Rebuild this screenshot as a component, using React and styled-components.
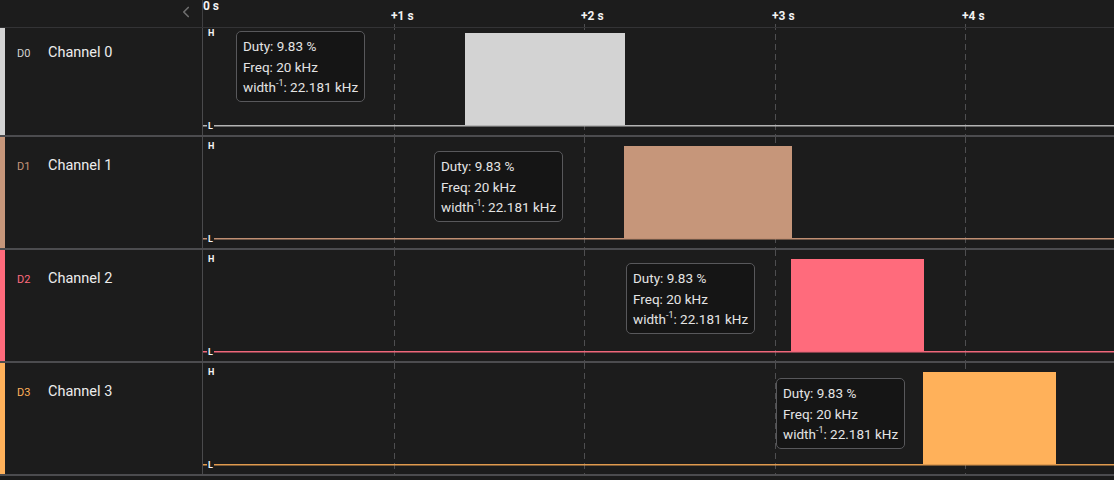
import React from "react";
import styled, { createGlobalStyle } from "styled-components";
import { ChevronLeft } from "lucide-react";

const PX_PER_SEC = 190.6;
const TRACK_W = 911;
const ROW_H = 111;

const channels = [
  { id: "D0", name: "Channel 0", color: "#d3d3d3", line: "#b4b4b4", pulse: [262, 422], tip: { x: 33, y: 7 } },
  { id: "D1", name: "Channel 1", color: "#c6967a", line: "#c08f73", pulse: [421, 589], tip: { x: 231, y: 14 } },
  { id: "D2", name: "Channel 2", color: "#ff6b7c", line: "#f0677a", pulse: [588, 721], tip: { x: 423, y: 13 } },
  { id: "D3", name: "Channel 3", color: "#ffb15a", line: "#e09a4e", pulse: [720, 853], tip: { x: 573, y: 15 } },
];

const ticks = [1, 2, 3, 4];

const GlobalStyle = createGlobalStyle`
  html, body {
    margin: 0;
    background: #1c1c1c;
    overflow: hidden;
  }
  * { box-sizing: border-box; }
`;

function Grid() {
  return (
    <>
      {ticks.map((t) => (
        <line
          key={t}
          x1={Math.round(t * PX_PER_SEC) + 0.5}
          x2={Math.round(t * PX_PER_SEC) + 0.5}
          y1="0"
          y2={ROW_H + 2}
          stroke="#4e4e50"
          strokeWidth="1"
          strokeDasharray="6 4"
        />
      ))}
    </>
  );
}

function Waveform({ ch }) {
  const [a, b] = ch.pulse;
  return (
    <Wave width={TRACK_W} height={ROW_H} viewBox={`0 0 ${TRACK_W} ${ROW_H}`}>
      <Grid />
      <rect x={a} y="9" width={b - a} height="93" fill={ch.color} />
      <rect x="0" y="101" width={TRACK_W} height="1.5" fill={ch.line} />
    </Wave>
  );
}

function Measure({ x, y }) {
  return (
    <Tooltip $x={x} $y={y}>
      <div>Duty: 9.83 %</div>
      <div>Freq: 20 kHz</div>
      <div>
        width<sup>-1</sup>: 22.181 kHz
      </div>
    </Tooltip>
  );
}

function App() {
  return (
    <Screen>
      <GlobalStyle />
      <Header>
        <HeaderSide>
          <ChevronLeft size={18} color="#6f6f6f" strokeWidth={2.2} />
        </HeaderSide>
        <Ruler>
          <TickLabel $x={0} $top>0 s</TickLabel>
          {ticks.map((t) => (
            <TickLabel key={t} $x={Math.round(t * PX_PER_SEC) - 3}>
              +{t} s
            </TickLabel>
          ))}
          <RulerMarks width={TRACK_W} height="27">
            {ticks.map((t) => (
              <line
                key={t}
                x1={Math.round(t * PX_PER_SEC) + 0.5}
                x2={Math.round(t * PX_PER_SEC) + 0.5}
                y1="24"
                y2="27"
                stroke="#4e4e50"
              />
            ))}
          </RulerMarks>
        </Ruler>
      </Header>
      <Viewport>
        <RowList>
          {channels.map((ch) => (
            <Row key={ch.id}>
              <ChannelCell>
                <ColorBar $color={ch.color} />
                <ChannelInfo>
                  <Tag $color={ch.color}>{ch.id}</Tag>
                  <Name>{ch.name}</Name>
                </ChannelInfo>
              </ChannelCell>
              <Track>
                <Waveform ch={ch} />
                <Level $pos="high">H</Level>
                <Level $pos="low">L</Level>
                <Measure x={ch.tip.x} y={ch.tip.y} />
              </Track>
            </Row>
          ))}
        </RowList>
      </Viewport>
    </Screen>
  );
}

const Screen = styled.div`
  display: flex;
  flex-direction: column;
  width: 1114px;
  height: 480px;
  overflow: hidden;
  background: #1c1c1c;
  font-family: Roboto, "Liberation Sans", sans-serif;
`;

const Header = styled.div`
  display: flex;
  height: 28px;
  flex: none;
  border-bottom: 1px solid #333335;
  position: relative;
  z-index: 2;
  background: #1c1c1c;
`;

const HeaderSide = styled.div`
  width: 203px;
  display: flex;
  align-items: center;
  justify-content: flex-end;
  padding-right: 7px;
  padding-bottom: 3px;
  border-right: 1px solid #3f3f41;
`;

const Ruler = styled.div`
  flex: 1;
  position: relative;
`;

const RulerMarks = styled.svg`
  position: absolute;
  left: 0;
  top: 0;
`;

const TickLabel = styled.span`
  position: absolute;
  left: ${({ $x }) => $x}px;
  top: ${({ $top }) => ($top ? "-1px" : "9px")};
  font-size: 12px;
  font-weight: 700;
  line-height: 14px;
  color: #f2f2f2;
  white-space: nowrap;
`;

const Viewport = styled.div`
  flex: 1;
  overflow: hidden;
`;

const RowList = styled.div`
  margin-top: -4px;
`;

const Row = styled.div`
  display: flex;
  height: ${ROW_H + 2}px;
  border-bottom: 2px solid #4c4c4f;
`;

const ChannelCell = styled.div`
  width: 203px;
  display: flex;
  border-right: 1px solid #4a4a4c;
`;

const ColorBar = styled.div`
  width: 5px;
  background: ${({ $color }) => $color};
`;

const ChannelInfo = styled.div`
  display: flex;
  align-items: baseline;
  padding: 20px 0 0 12px;
  gap: 14px;
`;

const Tag = styled.span`
  font-size: 11px;
  color: ${({ $color }) => $color};
  width: 17px;
`;

const Name = styled.span`
  font-size: 14.5px;
  color: #ececec;
`;

const Track = styled.div`
  flex: 1;
  position: relative;
`;

const Wave = styled.svg`
  display: block;
`;

const Level = styled.span`
  position: absolute;
  left: 4px;
  top: ${({ $pos }) => ($pos === "high" ? "4px" : "97px")};
  font-size: 9px;
  font-weight: 700;
  line-height: 10px;
  padding: 0 1px;
  color: #f4f4f4;
  background: ${({ $pos }) => ($pos === "low" ? "#1c1c1c" : "transparent")};
`;

const Tooltip = styled.div`
  position: absolute;
  left: ${({ $x }) => $x}px;
  top: ${({ $y }) => $y}px;
  padding: 4px 6px 3px 6px;
  border: 1px solid #58585b;
  border-radius: 5px;
  background: #151515;
  color: #e4e4e4;
  font-size: 13.5px;
  line-height: 20.5px;
  white-space: nowrap;

  sup {
    font-size: 9px;
    line-height: 0;
    vertical-align: 6px;
  }
`;

export default App;
